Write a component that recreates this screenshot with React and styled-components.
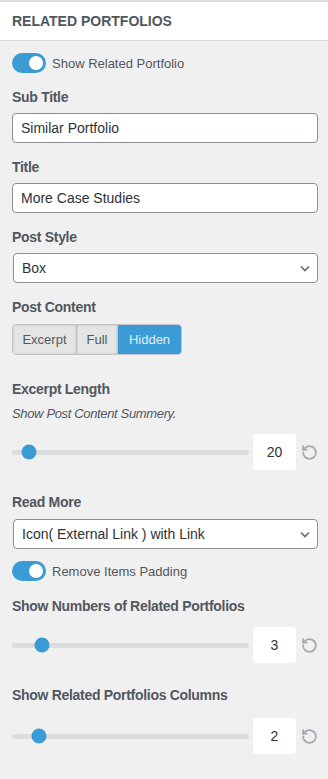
import React from "react";
import styled, { createGlobalStyle } from "styled-components";
import { RotateCcw } from "lucide-react";

const GlobalStyle = createGlobalStyle`
  html, body {
    margin: 0;
    padding: 0;
    background: #f0f0f1;
  }
  body {
    font-family: "Segoe UI", "Liberation Sans", Arial, sans-serif;
    color: #50575e;
  }
`;

const Panel = styled.div`
  width: 328px;
  min-height: 779px;
  background: #f0f0f1;
  border-top: 2px solid #dcdcde;
  box-sizing: border-box;
`;

const Header = styled.div`
  height: 38px;
  display: flex;
  align-items: center;
  padding: 0 12px;
  background: #fff;
  border-bottom: 1px solid #dcdcde;
  font-size: 14px;
  font-weight: 700;
  color: #50575e;
`;

const Body = styled.div`
  padding: 12px 10px 20px 12px;
  display: flex;
  flex-direction: column;
`;

const Field = styled.div`
  display: flex;
  flex-direction: column;
  margin-top: ${(p) => p.$top || 0}px;
`;

const Label = styled.div`
  font-size: 14px;
  font-weight: 700;
  letter-spacing: -0.3px;
  line-height: 20px;
  color: #50575e;
  margin-bottom: ${(p) => p.$gap ?? 6}px;
`;

const Description = styled.div`
  font-size: 13px;
  font-style: italic;
  letter-spacing: -0.35px;
  line-height: 20px;
  color: #50575e;
  margin-bottom: 10px;
`;

const TextInput = styled.div`
  height: 30px;
  box-sizing: border-box;
  border: 1px solid #8c8f94;
  border-radius: 4px;
  background: #fff;
  display: flex;
  align-items: center;
  padding: 0 8px;
  font-size: 14px;
  color: #2c3338;
`;

const Select = styled(TextInput)`
  justify-content: space-between;
  padding-right: 7px;
  margin-left: 1px;
`;

const ToggleRow = styled.div`
  display: flex;
  align-items: center;
  gap: 6px;
  font-size: 13px;
  color: #50575e;
  margin-top: ${(p) => p.$top || 0}px;
`;

const Switch = styled.div`
  width: 34px;
  height: 20px;
  border-radius: 10px;
  background: #3a9bd5;
  display: flex;
  align-items: center;
  justify-content: flex-end;
  padding: 0 3px;
  box-sizing: border-box;
`;

const Knob = styled.div`
  width: 14px;
  height: 14px;
  border-radius: 50%;
  background: #fff;
`;

const ButtonGroup = styled.div`
  display: flex;
  align-self: flex-start;
  border: 1px solid #c3c4c7;
  border-radius: 4px;
  overflow: hidden;
`;

const SegButton = styled.div`
  height: 29px;
  display: flex;
  align-items: center;
  justify-content: center;
  width: ${(p) => p.$w}px;
  font-size: 13px;
  box-sizing: border-box;
  background: ${(p) => (p.$active ? "#3a9bd5" : "#e5e5e5")};
  color: ${(p) => (p.$active ? "#e1eff9" : "#50575e")};
  box-shadow: ${(p) => (p.$active ? "none" : "inset 0 0 2px rgba(0,0,0,0.25)")};
  & + & {
    border-left: 1px solid #c3c4c7;
  }
`;

const SliderRow = styled.div`
  display: flex;
  align-items: center;
  height: 36px;
`;

const Track = styled.div`
  position: relative;
  flex: 1;
  height: 5px;
  background: #dcdcde;
  border-radius: 3px;
`;

const Thumb = styled.div`
  position: absolute;
  top: 50%;
  width: 15px;
  height: 15px;
  border-radius: 50%;
  background: #3a9bd5;
  transform: translate(-50%, -50%);
`;

const NumberBox = styled.div`
  width: 43px;
  height: 36px;
  margin-left: 4px;
  border-radius: 4px;
  background: #fff;
  display: flex;
  align-items: center;
  justify-content: center;
  font-size: 14px;
  color: #2c3338;
`;

const Reset = styled.div`
  width: 22px;
  display: flex;
  justify-content: flex-end;
  color: #a7aaad;
`;

const Chevron = () => (
  <svg width="10" height="7" viewBox="0 0 10 7">
    <path d="M1 1.5 L5 5.5 L9 1.5" fill="none" stroke="#646970" strokeWidth="1.6" />
  </svg>
);

const Slider = ({ value, pct }) => (
  <SliderRow>
    <Track>
      <Thumb style={{ left: `${pct}%` }} />
    </Track>
    <NumberBox>{value}</NumberBox>
    <Reset>
      <RotateCcw size={17} strokeWidth={2.6} />
    </Reset>
  </SliderRow>
);

const Toggle = ({ label, top }) => (
  <ToggleRow $top={top}>
    <Switch>
      <Knob />
    </Switch>
    {label}
  </ToggleRow>
);

export default function App() {
  return (
    <>
      <GlobalStyle />
      <Panel>
        <Header>RELATED PORTFOLIOS</Header>
        <Body>
          <Toggle label="Show Related Portfolio" />

          <Field $top={14}>
            <Label>Sub Title</Label>
            <TextInput>Similar Portfolio</TextInput>
          </Field>

          <Field $top={14}>
            <Label>Title</Label>
            <TextInput>More Case Studies</TextInput>
          </Field>

          <Field $top={14}>
            <Label>Post Style</Label>
            <Select>
              Box
              <Chevron />
            </Select>
          </Field>

          <Field $top={14}>
            <Label $gap={7}>Post Content</Label>
            <ButtonGroup>
              <SegButton $w={63}>Excerpt</SegButton>
              <SegButton $w={41}>Full</SegButton>
              <SegButton $w={64} $active>
                Hidden
              </SegButton>
            </ButtonGroup>
          </Field>

          <Field $top={24}>
            <Label $gap={5}>Excerpt Length</Label>
            <Description>Show Post Content Summery.</Description>
            <Slider value={20} pct={7} />
          </Field>

          <Field $top={22}>
            <Label $gap={7}>Read More</Label>
            <Select>
              Icon( External Link ) with Link
              <Chevron />
            </Select>
          </Field>

          <Toggle label="Remove Items Padding" top={12} />

          <Field $top={15}>
            <Label $gap={11}>Show Numbers of Related Portfolios</Label>
            <Slider value={3} pct={12.5} />
          </Field>

          <Field $top={22}>
            <Label $gap={13}>Show Related Portfolios Columns</Label>
            <Slider value={2} pct={11.5} />
          </Field>
        </Body>
      </Panel>
    </>
  );
}
